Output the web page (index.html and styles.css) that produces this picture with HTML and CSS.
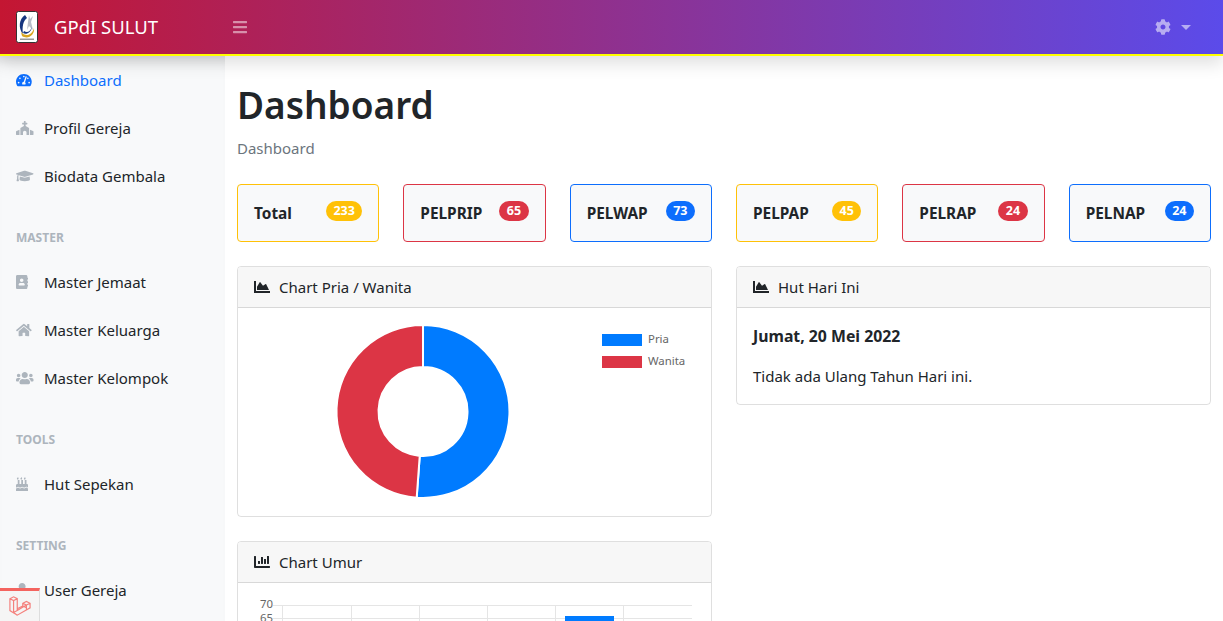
FILE: index.html
```html
<!DOCTYPE html>
<html lang="id">
<head>
    <meta charset="UTF-8">
    <meta name="viewport" content="width=device-width, initial-scale=1.0">
    <title>GPdI SULUT</title>
    <link rel="stylesheet" href="styles.css">
</head>
<body>
    <header class="navbar">
        <a class="brand" href="#">
            <svg class="brand-logo" viewBox="0 0 22 32">
                <rect x="0.5" y="0.5" width="21" height="31" rx="2" fill="#fff" stroke="#333"/>
                <path d="M9 4C3 8 2 17 7 23C6 16 7 10 11 7Z" fill="#16357f"/>
                <path d="M13 4l1 4 3-3-2 6 2 8-4-4-2 4 1-8Z" fill="#b9bdc9"/>
                <path d="M5 21C9 26 16 25 18 17C19 24 12 29 6 25Z" fill="#d9a520"/>
                <path d="M8 20c3 2 6 1 8-4-1 6-6 8-9 6Z" fill="#16357f"/>
                <rect x="4" y="27.500" width="14" height="1.5" fill="#999"/>
            </svg>
            <span>GPdI SULUT</span>
        </a>
        <button class="nav-toggle" type="button">
            <svg class="nav-icon-bars" viewBox="0 0 448 512"><path d="M16 132h416c8.837 0 16-7.163 16-16V76c0-8.837-7.163-16-16-16H16C7.163 60 0 67.163 0 76v40c0 8.837 7.163 16 16 16zm0 160h416c8.837 0 16-7.163 16-16v-40c0-8.837-7.163-16-16-16H16c-8.837 0-16 7.163-16 16v40c0 8.837 7.163 16 16 16zm0 160h416c8.837 0 16-7.163 16-16v-40c0-8.837-7.163-16-16-16H16c-8.837 0-16 7.163-16 16v40c0 8.837 7.163 16 16 16z"/></svg>
        </button>
        <button class="nav-user" type="button">
            <svg class="nav-icon-gear" viewBox="0 0 512 512"><path d="M487.4 315.7l-42.6-24.6c4.3-23.2 4.3-47 0-70.2l42.6-24.6c4.9-2.8 7.1-8.6 5.5-14-11.1-35.6-30-67.8-54.7-94.6-3.8-4.1-10-5.1-14.8-2.3L380.8 110c-17.9-15.4-38.5-27.3-60.8-35.1V25.8c0-5.6-3.9-10.5-9.4-11.7-36.7-8.2-74.3-7.8-109.2 0-5.5 1.2-9.4 6.1-9.4 11.7V75c-22.2 7.9-42.8 19.8-60.8 35.1L88.7 85.5c-4.9-2.8-11-1.9-14.8 2.3-24.7 26.7-43.6 58.9-54.7 94.6-1.7 5.4.6 11.2 5.5 14L67.3 221c-4.3 23.2-4.3 47 0 70.2l-42.6 24.6c-4.9 2.8-7.1 8.6-5.5 14 11.1 35.6 30 67.8 54.7 94.6 3.8 4.1 10 5.1 14.8 2.3l42.6-24.6c17.9 15.4 38.5 27.3 60.8 35.1v49.2c0 5.6 3.9 10.5 9.4 11.7 36.7 8.2 74.3 7.8 109.2 0 5.5-1.2 9.4-6.1 9.4-11.7v-49.2c22.2-7.9 42.8-19.8 60.8-35.1l42.6 24.6c4.9 2.8 11 1.9 14.8-2.3 24.7-26.7 43.6-58.9 54.7-94.6 1.5-5.5-.7-11.3-5.6-14.1zM256 336c-44.1 0-80-35.9-80-80s35.9-80 80-80 80 35.9 80 80-35.9 80-80 80z"/></svg>
            <span class="caret"></span>
        </button>
    </header>

    <div class="layout">
        <nav class="sidebar">
            <a class="side-link active" href="#">
                <span class="side-icon"><svg viewBox="0 0 576 512"><path d="M288 32C128.94 32 0 160.94 0 320c0 52.8 14.25 102.26 39.06 144.8 5.61 9.62 16.3 15.2 27.44 15.2h443c11.14 0 21.83-5.58 27.44-15.2C561.75 422.26 576 372.8 576 320c0-159.06-128.94-288-288-288zm0 64c14.71 0 26.58 10.13 30.32 23.65-1.11 2.26-2.64 4.23-3.45 6.67l-9.22 27.67c-5.13 3.49-10.97 6.01-17.64 6.01-17.67 0-32-14.33-32-32S270.33 96 288 96zM96 384c-17.67 0-32-14.33-32-32s14.33-32 32-32 32 14.33 32 32-14.33 32-32 32zm48-160c-17.67 0-32-14.33-32-32s14.33-32 32-32 32 14.33 32 32-14.33 32-32 32zm246.77-72.41l-61.33 184C343.13 347.33 352 364.54 352 384c0 11.72-3.38 22.55-8.88 32H232.88c-5.5-9.45-8.88-20.28-8.88-32 0-33.94 26.5-61.43 59.9-63.59l61.34-184.01c4.17-12.56 17.73-19.45 30.36-15.17 12.57 4.19 19.35 17.79 15.17 30.36zm14.66 57.2l15.52-46.55c3.47-1.29 7.13-2.23 11.05-2.23 17.67 0 32 14.33 32 32s-14.33 32-32 32c-11.38-.01-20.89-6.28-26.57-15.22zM480 384c-17.67 0-32-14.33-32-32s14.33-32 32-32 32 14.33 32 32-14.33 32-32 32z"/></svg></span>
                Dashboard
            </a>
            <a class="side-link" href="#">
                <span class="side-icon"><svg viewBox="0 0 640 512"><path d="M464.46 246.68L352 179.2V128h48c8.84 0 16-7.16 16-16V80c0-8.84-7.16-16-16-16h-48V16c0-8.84-7.16-16-16-16h-32c-8.84 0-16 7.16-16 16v48h-48c-8.84 0-16 7.16-16 16v32c0 8.84 7.16 16 16 16h48v51.2l-112.46 67.48A31.997 31.997 0 0 0 160 274.12V512h96v-96c0-35.35 28.65-64 64-64s64 28.65 64 64v96h96V274.12c0-11.24-5.9-21.66-15.54-27.44zM0 395.96V496c0 8.84 7.16 16 16 16h112V320L19.39 366.54A32.024 32.024 0 0 0 0 395.96zm620.61-29.42L512 320v192h112c8.84 0 16-7.16 16-16V395.96c0-12.8-7.63-24.37-19.39-29.42z"/></svg></span>
                Profil Gereja
            </a>
            <a class="side-link" href="#">
                <span class="side-icon"><svg viewBox="0 0 640 512"><path d="M622.34 153.2L343.4 67.5c-15.2-4.67-31.6-4.67-46.79 0L17.66 153.2c-23.54 7.23-23.54 38.36 0 45.59l48.63 14.94c-10.67 13.19-17.23 29.28-17.88 46.9C38.78 266.15 32 276.11 32 288c0 10.78 5.68 19.85 13.86 25.65L20.33 428.53C18.11 438.52 25.71 448 35.94 448h56.11c10.24 0 17.84-9.48 15.62-19.47L82.14 313.65C90.32 307.85 96 298.78 96 288c0-11.57-6.47-21.25-15.66-26.87.76-15.02 8.44-28.3 20.69-36.72L296.6 284.5c9.06 2.78 26.44 6.25 46.79 0l278.95-85.7c23.55-7.24 23.55-38.36 0-45.6zM352.79 315.09c-28.53 8.76-52.84 3.92-65.59 0l-145.02-44.55L128 384c0 35.35 85.96 64 192 64s192-28.65 192-64l-14.18-113.47-145.03 44.56z"/></svg></span>
                Biodata Gembala
            </a>

            <div class="side-heading">MASTER</div>
            <a class="side-link" href="#">
                <span class="side-icon"><svg viewBox="0 0 448 512"><path d="M436 160c6.6 0 12-5.4 12-12v-40c0-6.6-5.4-12-12-12h-20V48c0-26.5-21.5-48-48-48H48C21.5 0 0 21.5 0 48v416c0 26.5 21.5 48 48 48h320c26.5 0 48-21.5 48-48v-48h20c6.6 0 12-5.4 12-12v-40c0-6.6-5.4-12-12-12h-20v-64h20c6.6 0 12-5.4 12-12v-40c0-6.6-5.4-12-12-12h-20v-64h20zm-228-32c35.3 0 64 28.7 64 64s-28.7 64-64 64-64-28.7-64-64 28.7-64 64-64zm112 236.8c0 10.6-10 19.2-22.4 19.2H118.4C106 384 96 375.4 96 364.8v-19.2c0-31.8 30.1-57.6 67.2-57.6h5c12.3 5.1 25.7 8 39.8 8s27.6-2.9 39.8-8h5c37.1 0 67.2 25.8 67.2 57.6v19.2z"/></svg></span>
                Master Jemaat
            </a>
            <a class="side-link" href="#">
                <span class="side-icon"><svg viewBox="0 0 576 512"><path d="M280.37 148.26L96 300.11V464a16 16 0 0 0 16 16l112.06-.29a16 16 0 0 0 15.92-16V368a16 16 0 0 1 16-16h64a16 16 0 0 1 16 16v95.64a16 16 0 0 0 16 16.05L464 480a16 16 0 0 0 16-16V300L295.67 148.26a12.19 12.19 0 0 0-15.3 0zM571.6 251.47L488 182.56V44.05a12 12 0 0 0-12-12h-56a12 12 0 0 0-12 12v72.61L318.47 43a48 48 0 0 0-61 0L4.34 251.47a12 12 0 0 0-1.6 16.9l25.5 31A12 12 0 0 0 45.15 301l235.22-193.74a12.19 12.19 0 0 1 15.3 0L530.9 301a12 12 0 0 0 16.9-1.6l25.5-31a12 12 0 0 0-1.7-16.93z"/></svg></span>
                Master Keluarga
            </a>
            <a class="side-link" href="#">
                <span class="side-icon"><svg viewBox="0 0 640 512"><path d="M96 224c35.3 0 64-28.7 64-64s-28.7-64-64-64-64 28.7-64 64 28.7 64 64 64zm448 0c35.3 0 64-28.7 64-64s-28.7-64-64-64-64 28.7-64 64 28.7 64 64 64zm32 32h-64c-17.6 0-33.5 7.1-45.1 18.6 40.3 22.1 68.9 62 75.1 109.4h66c17.7 0 32-14.3 32-32v-32c0-35.3-28.7-64-64-64zm-256 0c61.9 0 112-50.1 112-112S381.9 32 320 32 208 82.1 208 144s50.1 112 112 112zm76.8 32h-8.3c-20.8 10-43.9 16-68.5 16s-47.6-6-68.5-16h-8.3C179.6 288 128 339.6 128 403.2V432c0 26.5 21.5 48 48 48h288c26.5 0 48-21.5 48-48v-28.8c0-63.6-51.6-115.2-115.2-115.2zm-223.7-13.4C161.5 263.1 145.6 256 128 256H64c-35.3 0-64 28.7-64 64v32c0 17.7 14.3 32 32 32h65.9c6.3-47.4 34.9-87.3 75.2-109.4z"/></svg></span>
                Master Kelompok
            </a>

            <div class="side-heading">TOOLS</div>
            <a class="side-link" href="#">
                <span class="side-icon"><svg viewBox="0 0 448 512"><path d="M448 384c-28.02 0-31.26-32-74.5-32-43.43 0-46.825 32-74.75 32-27.695 0-31.454-32-74.75-32-42.842 0-47.218 32-74.5 32-28.148 0-31.202-32-74.75-32-43.547 0-46.653 32-74.75 32v-80c0-26.5 21.5-48 48-48h16V112h64v144h64V112h64v144h64V112h64v144h16c26.5 0 48 21.5 48 48v80zm0 128H0v-96c43.356 0 46.767-32 74.75-32 27.951 0 31.253 32 74.75 32 42.843 0 47.217-32 74.5-32 28.148 0 31.201 32 74.75 32 43.357 0 46.767-32 74.75-32 27.488 0 31.252 32 74.5 32v96zM64 96c-17.75 0-32-14.25-32-32 0-31 32-23 32-64 12 0 32 29.5 32 56s-14.25 40-32 40zm128 0c-17.75 0-32-14.25-32-32 0-31 32-23 32-64 12 0 32 29.5 32 56s-14.25 40-32 40zm128 0c-17.75 0-32-14.25-32-32 0-31 32-23 32-64 12 0 32 29.5 32 56s-14.25 40-32 40z"/></svg></span>
                Hut Sepekan
            </a>

            <div class="side-heading">SETTING</div>
            <a class="side-link" href="#">
                <span class="side-icon"><svg viewBox="0 0 448 512"><path d="M224 256c70.7 0 128-57.3 128-128S294.7 0 224 0 96 57.3 96 128s57.3 128 128 128zm89.6 32h-16.7c-22.2 10.2-46.9 16-72.9 16s-50.6-5.8-72.9-16h-16.7C60.2 288 0 348.2 0 422.4V464c0 26.5 21.5 48 48 48h352c26.5 0 48-21.5 48-48v-41.6c0-74.2-60.2-134.4-134.4-134.4z"/></svg></span>
                User Gereja
            </a>
        </nav>

        <main class="content">
            <h1 class="page-title">Dashboard</h1>
            <div class="crumb">Dashboard</div>

            <div class="stats">
                <div class="stat stat-yellow"><span class="stat-name">Total</span><span class="badge">233</span></div>
                <div class="stat stat-red"><span class="stat-name">PELPRIP</span><span class="badge">65</span></div>
                <div class="stat stat-blue"><span class="stat-name">PELWAP</span><span class="badge">73</span></div>
                <div class="stat stat-yellow"><span class="stat-name">PELPAP</span><span class="badge">45</span></div>
                <div class="stat stat-red"><span class="stat-name">PELRAP</span><span class="badge">24</span></div>
                <div class="stat stat-blue"><span class="stat-name">PELNAP</span><span class="badge">24</span></div>
            </div>

            <div class="panels">
                <div class="panel-col">
                    <section class="panel">
                        <div class="panel-head">
                            <svg class="head-icon" viewBox="0 0 512 512"><path d="M500 384c6.6 0 12 5.4 12 12v40c0 6.6-5.4 12-12 12H12c-6.6 0-12-5.4-12-12V76c0-6.6 5.4-12 12-12h40c6.6 0 12 5.4 12 12v308h436zM372.7 159.5L288 216l-85.3-113.7c-5.1-6.8-15.5-6.3-19.9 1L96 248v104h384l-89.9-187.8c-3.2-6.5-11.4-8.7-17.4-4.7z"/></svg>
                            Chart Pria / Wanita
                        </div>
                        <svg class="chart chart-donut" viewBox="0 0 473 208">
                            <path class="slice-blue" d="M185 17A86.5 86.5 0 1 1 178.67 189.77L181.74 147.88A44.5 44.5 0 1 0 185 59Z"/>
                            <path class="slice-red" d="M178.67 189.77A86.5 86.5 0 0 1 185 17L185 59A44.5 44.5 0 0 0 181.74 147.88Z"/>
                            <rect class="fill-blue" x="364" y="26" width="40" height="12"/>
                            <text class="chart-text" x="410" y="35">Pria</text>
                            <rect class="fill-red" x="364" y="48" width="40" height="12"/>
                            <text class="chart-text" x="410" y="57">Wanita</text>
                        </svg>
                    </section>

                    <section class="panel">
                        <div class="panel-head">
                            <svg class="head-icon" viewBox="0 0 512 512"><path d="M332.8 320h38.4c6.4 0 12.8-6.4 12.8-12.8V172.8c0-6.4-6.4-12.8-12.8-12.8h-38.4c-6.4 0-12.8 6.4-12.8 12.8v134.4c0 6.4 6.4 12.8 12.8 12.8zm96 0h38.4c6.4 0 12.8-6.4 12.8-12.8V76.8c0-6.4-6.4-12.8-12.8-12.8h-38.4c-6.4 0-12.8 6.4-12.8 12.8v230.4c0 6.4 6.4 12.8 12.8 12.8zm-288 0h38.4c6.4 0 12.8-6.4 12.8-12.8v-70.4c0-6.4-6.4-12.8-12.8-12.8h-38.4c-6.4 0-12.8 6.4-12.8 12.8v70.4c0 6.4 6.4 12.8 12.8 12.8zm96 0h38.4c6.4 0 12.8-6.4 12.8-12.8V108.8c0-6.4-6.4-12.8-12.8-12.8h-38.4c-6.4 0-12.8 6.4-12.8 12.8v198.4c0 6.4 6.4 12.8 12.8 12.8zM496 384H64V80c0-8.84-7.16-16-16-16H16C7.16 64 0 71.16 0 80v336c0 17.67 14.33 32 32 32h464c8.84 0 16-7.16 16-16v-32c0-8.84-7.16-16-16-16z"/></svg>
                            Chart Umur
                        </div>
                        <svg class="chart chart-bars" viewBox="0 0 473 120">
                            <path class="grid" d="M35 22.500H454M35 35.500H454M35 48.500H454M35 61.500H454M35 74.500H454M35 87.500H454M44.500 22V120M113.500 22V120M181.500 22V120M249.500 22V120M317.500 22V120M385.500 22V120"/>
                            <rect class="fill-blue" x="327" y="33" width="49" height="87"/>
                            <text class="chart-text axis" x="35" y="24.500">70</text>
                            <text class="chart-text axis" x="35" y="38.500">65</text>
                        </svg>
                    </section>
                </div>

                <div class="panel-col">
                    <section class="panel">
                        <div class="panel-head">
                            <svg class="head-icon" viewBox="0 0 512 512"><path d="M500 384c6.6 0 12 5.4 12 12v40c0 6.6-5.4 12-12 12H12c-6.6 0-12-5.4-12-12V76c0-6.6 5.4-12 12-12h40c6.6 0 12 5.4 12 12v308h436zM372.7 159.5L288 216l-85.3-113.7c-5.1-6.8-15.5-6.3-19.9 1L96 248v104h384l-89.9-187.8c-3.2-6.5-11.4-8.7-17.4-4.7z"/></svg>
                            Hut Hari Ini
                        </div>
                        <div class="panel-body">
                            <p class="hut-date">Jumat, 20 Mei 2022</p>
                            <p>Tidak ada Ulang Tahun Hari ini.</p>
                        </div>
                    </section>
                </div>
            </div>
        </main>
    </div>

    <div class="debugbar">
        <svg viewBox="0 0 24 24"><path d="M1 4L5 2L9 4V15L15 12V9L19 7L23 9V14L9 22L1 17ZM1 4L5 6L9 4M5 6V19L9 22M5 19L9 17L19 11M15 9L19 11L23 9M19 11V16M15 12L19 14M9 15L9 17"/></svg>
    </div>
</body>
</html>
```

FILE: styles.css
```css
* {
    box-sizing: border-box;
}
html, body {
    height: 100%;
}
body {
    font-family: "Noto Sans", "Open Sans", sans-serif;
    font-size: 15px;
    line-height: 24px;
    color: #212529;
    background-color: #fff;
    margin: 0;
    overflow: hidden;
}
a {
    text-decoration: none;
    color: inherit;
}
button {
    background: none;
    border: none;
    padding: 0;
    display: flex;
    align-items: center;
}

/* navbar */
.navbar {
    display: flex;
    align-items: center;
    height: 56px;
    padding: 0 32px 0 16px;
    background: linear-gradient(to right, #c41632, #5b4bea);
    border-bottom: 2px solid #ffff00;
    box-shadow: 0 8px 16px rgba(0, 0, 0, 0.12);
    position: relative;
    z-index: 2;
}
.brand {
    display: flex;
    align-items: center;
    gap: 16px;
    width: 217px;
    color: #fff;
    font-size: 18.500px;
}
.brand-logo {
    width: 22px;
    height: 32px;
}
.nav-icon-bars {
    height: 16px;
    fill: rgba(255, 255, 255, 0.5);
}
.nav-user {
    margin-left: auto;
    gap: 10px;
}
.nav-icon-gear {
    height: 16px;
    fill: rgba(255, 255, 255, 0.55);
}
.caret {
    border-top: 5px solid rgba(255, 255, 255, 0.55);
    border-left: 5px solid transparent;
    border-right: 5px solid transparent;
}

/* sidebar */
.layout {
    display: flex;
    height: calc(100vh - 56px);
}
.sidebar {
    flex: 0 0 225px;
    padding-top: 1px;
    background-color: #f8f9fa;
    box-shadow: inset 0 12px 12px -8px rgba(0, 0, 0, 0.1);
}
.side-link {
    display: flex;
    align-items: center;
    height: 48px;
    padding: 0 0 2px 16px;
}
.side-link.active {
    color: #0d6efd;
}
.side-icon {
    display: flex;
    flex: 0 0 28px;
}
.side-icon svg {
    height: 14px;
    fill: #adb5bd;
}
.active .side-icon svg {
    fill: #0d6efd;
}
.side-heading {
    height: 58px;
    padding: 28px 16px 0;
    font-size: 12px;
    line-height: 18px;
    font-weight: 700;
    color: #adb5bd;
}

/* content */
.content {
    flex: 1;
    min-width: 0;
    padding: 25px 12px 0;
    overflow: hidden;
}
.page-title {
    font-size: 37px;
    line-height: 48px;
    font-weight: 600;
    margin: 0 0 7px;
}
.crumb {
    color: #6c757d;
    margin-bottom: 24px;
}
.stats {
    display: grid;
    grid-template-columns: repeat(6, 1fr);
    gap: 24px;
    margin-bottom: 24px;
}
.stat {
    display: flex;
    justify-content: space-between;
    height: 58px;
    padding: 16px;
    background-color: #f8f9fa;
    border: 1px solid;
    border-radius: 4px;
}
.stat-name {
    font-size: 15.400px;
    line-height: 26px;
    font-weight: 700;
}
.badge {
    height: 20px;
    padding: 0 7.500px;
    border-radius: 10px;
    color: #fff;
    font-size: 12.500px;
    line-height: 20px;
    font-weight: 700;
}
.stat-yellow {
    border-color: #ffc107;
}
.stat-yellow .badge {
    background-color: #ffc107;
}
.stat-red {
    border-color: #dc3545;
}
.stat-red .badge {
    background-color: #dc3545;
}
.stat-blue {
    border-color: #0d6efd;
}
.stat-blue .badge {
    background-color: #0d6efd;
}

/* panels */
.panels {
    display: grid;
    grid-template-columns: 1fr 1fr;
    gap: 24px;
    align-items: start;
}
.panel-col {
    display: flex;
    flex-direction: column;
    gap: 24px;
}
.panel {
    border: 1px solid rgba(0, 0, 0, 0.125);
    border-radius: 4px;
    overflow: hidden;
}
.panel-head {
    display: flex;
    align-items: center;
    gap: 9px;
    height: 41px;
    padding: 0 16px;
    background-color: #f7f7f7;
    border-bottom: 1px solid rgba(0, 0, 0, 0.125);
}
.head-icon {
    height: 16px;
    fill: #212529;
}
.panel-body {
    padding: 16px;
}
.panel-body p {
    margin: 0 0 16px;
}
.panel-body p:last-child {
    margin-bottom: 0;
}
.panel-body .hut-date {
    font-size: 15.800px;
    font-weight: 700;
}

/* charts */
.chart {
    display: block;
    width: 100%;
}
.chart-donut {
    height: 208px;
}
.slice-blue, .slice-red {
    stroke: #fff;
    stroke-width: 2;
}
.slice-blue, .fill-blue {
    fill: #007bff;
}
.slice-red, .fill-red {
    fill: #dc3545;
}
.chart-text {
    font-size: 11.400px;
    fill: #666;
}
.axis {
    text-anchor: end;
}
.grid {
    fill: none;
    stroke: #e5e5e5;
    stroke-width: 1;
}

/* debug bar tab */
.debugbar {
    position: fixed;
    left: 0;
    bottom: 0;
    display: flex;
    align-items: center;
    justify-content: center;
    width: 40px;
    height: 33px;
    background-color: #f5f5f5;
    border-top: 3px solid #f4645f;
    border-right: 1px solid #ddd;
    z-index: 3;
}
.debugbar svg {
    width: 22px;
    height: 22px;
    fill: none;
    stroke: #f4645f;
    stroke-width: 1.3;
    opacity: 0.8;
}
```
